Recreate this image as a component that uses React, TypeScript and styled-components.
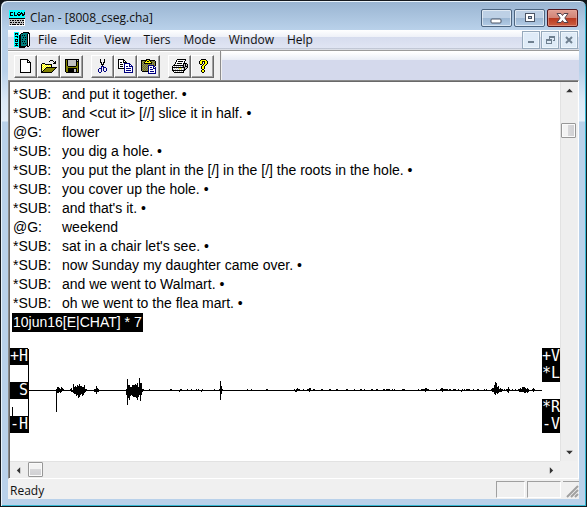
import React from "react";
import styled, { createGlobalStyle, css } from "styled-components";

const GlobalStyle = createGlobalStyle`
  * { box-sizing: border-box; }
  body { margin: 0; background: #101418; }
  button { font: inherit; color: inherit; margin: 0; padding: 0; border: 0; background: none; }
`;

/* ---------- pixel drawings ---------- */

const palette: Record<string, string> = {
  "#": "#000000",
  w: "#ffffff",
  o: "#808000",
  y: "#ffff00",
  p: "#ffff9c",
  b: "#000080",
  g: "#808080",
  s: "#c0c0c0",
  c: "#00ffff",
  t: "#008080",
};

function PixelArt({ rows }: { rows: string[] }) {
  const width = Math.max(...rows.map((r) => r.length));
  const paths: Record<string, string> = {};
  rows.forEach((row, y) => {
    let x = 0;
    while (x < row.length) {
      let end = x + 1;
      while (end < row.length && row[end] === row[x]) end++;
      if (palette[row[x]]) {
        paths[row[x]] = (paths[row[x]] || "") + `M${x} ${y}h${end - x}v1h${x - end}z`;
      }
      x = end;
    }
  });
  return (
    <svg width={width} height={rows.length} viewBox={`0 0 ${width} ${rows.length}`} shapeRendering="crispEdges" aria-hidden="true">
      {Object.entries(paths).map(([key, d]) => (
        <path key={key} d={d} fill={palette[key]} />
      ))}
    </svg>
  );
}

const appIcon = [
  "cccccccccccccccc",
  "cccccccccccccccc",
  "c###c#ccc##c#cc#",
  "c#ccc#cc#cc###c#",
  "c#ccc#cc####c###",
  "c###c###c##cc##c",
  "cccccccccccccccc",
  "cccccccccccccccc",
  "################",
  "sssssssssssssssw",
  "s#s##s#s##s#s##w",
  "sssssssssssssssw",
  "s##s#s##s##s#s#w",
  "sssssssssssssssw",
  "s#s####s##s##s#w",
  "wwwwwwwwwwwwwwww",
];
const docIcon = [
  "ccccc....######.",
  "c###c..##ttttt##",
  "c#c#c.#tttttt#w#",
  "ccccc##t#t#tt#w#",
  "c###c##tttttt#w#",
  "ccc#c##tt#t#t#w#",
  "ccccc##tttttt#w#",
  "c###c##t#tt#t#w#",
  "c#c#c##tttttt#w#",
  "c###c##t#t#tt#w#",
  "ccccc##tttttt#w#",
  "c###c##tt#t#t#w#",
  "cc#cc##tttttt#w#",
  "c###c##ttttt##.#",
  "ccccc#######.##.",
  ".....######.....",
];
const newIcon = [
  "########...",
  "#wwwwww##..",
  "#wwwwww#w#.",
  "#wwwwww####",
  ...Array(9).fill("#wwwwwwwww#"),
  "###########",
];
const openIcon = [
  ".........###....",
  "........#...#.#.",
  ".............##.",
  ".###........###.",
  "#pyp#######.....",
  "#ypypypypy#.....",
  "#pypypypyp#.....",
  "#ypyp###########",
  "#pyp#ooooooooo#.",
  "#yp#ooooooooo#..",
  "#p#ooooooooo#...",
  "##ooooooooo#....",
  "###########.....",
];
const saveIcon = [
  "##############",
  "#o#ssssssss#s#",
  "#o#ssssssss###",
  "#o#ssssssss#o#",
  "#o#ssssssss#o#",
  "#o#ssssssss#o#",
  "#o#ssssssss#o#",
  "#oo########oo#",
  "#oooooooooooo#",
  "#oo#########o#",
  "#oo######ss#o#",
  "#oo######ss#o#",
  "#oo######ss#o#",
  ".#############",
];
const cutIcon = [
  "..#...#..",
  "..#...#..",
  "..#...#..",
  "..##.##..",
  "...#.#...",
  "...###...",
  "....#....",
  "...bbb...",
  "...b.bbb.",
  ".bbb.b..b",
  "b..b.b..b",
  "b..b.b..b",
  "b..b..bb.",
  ".bb......",
];
const copyIcon = [
  "######.........",
  "#wwww##........",
  "#wwww#w#.......",
  "#w##w####......",
  "#wwwwwbbbbbb...",
  "#w###wbwwwwbb..",
  "#wwwwwbwwwwbwb.",
  "#w###wbwbbwbbbb",
  "#wwwwwbwwwwwwwb",
  "######bwbbbbbwb",
  "......bwwwwwwwb",
  "......bwbbbbbwb",
  "......bwwwwwwwb",
  "......bbbbbbbbb",
];
const pasteIcon = [
  ".....####......",
  "######yy######.",
  "#ogo#y##y#ogog#",
  "#go#yyyyyy#ogo#",
  "#og########gog#",
  "#gogogogogogog#",
  "#ogogogbbbbbbo#",
  "#gogogobwwwwbb.",
  "#ogogogbwbbwbwb",
  "#gogogobwwwwbbb",
  "#ogogogbwbbbwwb",
  "#gogogobwwwwwwb",
  ".######bwbbbbwb",
  ".......bwwwwwwb",
  ".......bbbbbbbb",
];
const printIcon = [
  ".....#########..",
  "....#wwwwwwww#..",
  "....#w#####w#...",
  "...#wwwwwwww#...",
  "...#w#####w####.",
  "..#wwwwwwww#s#s#",
  ".###########s#s#",
  "#wswswswsws#s###",
  "#############ss#",
  "#wswswsyysws#s#.",
  "#swswswswsws##..",
  "#############...",
  ".#wswswswsw#....",
  "..##########....",
];
const helpIcon = [
  "...#####..",
  "..#yyyyy#.",
  ".#yy###yy#",
  ".#yy#.#yy#",
  ".#yy#.#yy#",
  "..##.#yy#.",
  "....#yy#..",
  "...#yy#...",
  "...#yy#...",
  "...#yy#...",
  "....##....",
  "...#yy#...",
  "...#yy#...",
  "....##....",
];

/* ---------- window frame ---------- */

const Window = styled.div`
  min-height: 100vh;
  display: flex;
  flex-direction: column;
  padding: 0 7px 7px;
  border: 1px solid #15191e;
  border-radius: 7px 7px 0 0;
  background: linear-gradient(#99b4d1, #b9d1ea 29px, #b9d1ea 70px, #dce9f6 100px, #e3eef9 120px, #b9d1ea 121px);
  box-shadow: inset 1px 1px #e9f3fb, inset -1px -1px #36b8d3;
  font: 12px/16px "Open Sans", "Noto Sans", sans-serif;
  color: #111;
`;

const TitleBar = styled.header`
  height: 29px;
  display: flex;
  align-items: center;
  gap: 5px;
  padding: 4px 1px 0 1px;
`;

const Title = styled.h1`
  flex: 1;
  margin: 0;
  font-size: 12px;
  font-weight: 400;
  white-space: nowrap;
`;

const Caption = styled.div`
  display: flex;
  gap: 2px;
  height: 18px;
`;

const CaptionButton = styled.button<{ $close?: boolean }>`
  width: 31px;
  height: 18px;
  display: grid;
  place-items: center;
  border: 1px solid #4d6580;
  border-radius: 2px;
  box-shadow: inset 0 0 0 1px #ffffff88;
  background: linear-gradient(#bdd0e5 50%, #9bb6d2 50%, #b3cce6);
  ${(p) =>
    p.$close &&
    css`
      border-color: #501820;
      box-shadow: inset 0 0 0 1px #e9a79a99;
      background: linear-gradient(#dfa094, #d18375 50%, #b8371e 50%, #cc5f42);
    `}
`;

const Client = styled.div`
  flex: 1;
  display: flex;
  flex-direction: column;
  background: #f0f0f0;
`;

const MenuBar = styled.nav`
  height: 20px;
  display: flex;
  align-items: center;
  padding-left: 6px;
  background: linear-gradient(#ffffff, #eef1f8 7px, #d6dcee 7px, #e0e5f3 18px, #b5bccd 18px, #e8eaf0);
`;

const MenuItems = styled.div`
  flex: 1;
  display: flex;
  gap: 13px;
  padding-left: 8px;
`;

const MenuItem = styled.button`
  white-space: nowrap;
`;

const ChildControls = styled.div`
  display: flex;
  gap: 1px;
  padding-right: 1px;
`;

const ChildButton = styled.button`
  width: 18px;
  height: 18px;
  display: grid;
  place-items: center;
  border: 1px solid #96a9bb;
  background: #dfebf7;
  box-shadow: inset 0 0 0 1px #eef6fc;
`;

const ToolRow = styled.div`
  height: 30px;
  display: flex;
  border-top: 1px solid #9b9b9b;
  box-shadow: inset 0 1px #fff;
`;

const Toolbar = styled.div`
  display: flex;
  align-items: center;
  gap: 8px;
  padding: 1px 6px 0;
  border-right: 1px solid #8c8c8c;
`;

const ToolGroup = styled.div`
  display: flex;
`;

const ToolButton = styled.button`
  width: 23px;
  height: 23px;
  display: grid;
  place-items: center;
  border: 1px solid;
  border-color: #fff #696969 #696969 #fff;
  box-shadow: inset -1px -1px #a0a0a0;
`;

const ToolFill = styled.div`
  flex: 1;
  margin: 1px 0 0 1px;
  background: linear-gradient(#ffffff, #e9edf6 8px, #d4d9ec 8px);
`;

/* ---------- document ---------- */

const Document = styled.main`
  flex: 1;
  display: grid;
  grid-template-columns: 1fr 17px;
  grid-template-rows: 1fr 17px;
  border: 1px solid;
  border-color: #8a8a8a #fff #fff #8a8a8a;
  box-shadow: inset 1px 1px #696969;
  padding: 1px 1px 0 1px;
`;

const Page = styled.div`
  min-width: 0;
  padding-top: 3px;
  background: #fff;
  color: #000;
`;

const Line = styled.div`
  display: grid;
  grid-template-columns: 49px 1fr;
  padding-left: 3px;
  font: 14px/19px "Liberation Sans", Arial, sans-serif;
`;

const FileStatus = styled.div`
  width: fit-content;
  margin-left: 2px;
  padding: 0 1px;
  background: #000;
  color: #fff;
  font: 14px/19px "Liberation Sans", Arial, sans-serif;
`;

const Sound = styled.section`
  display: flex;
  height: 85px;
  margin-top: 16px;
`;

const SoundKeys = styled.div`
  width: 18px;
  display: grid;
  grid-template-rows: repeat(5, 17px);
`;

const SoundKey = styled.button<{ $row: number }>`
  grid-row: ${(p) => p.$row};
  background: #000;
  color: #fff;
  text-align: right;
  font: 15px/17px "DejaVu Sans Mono", monospace;
`;

const Tick = styled.span`
  grid-row: 4;
  align-self: end;
  width: 1px;
  height: 9px;
  margin-left: 2px;
  background: #000;
`;

const Wave = styled.svg`
  flex: 1;
  min-width: 0;
  height: 85px;
`;

const ScrollBar = styled.div<{ $vertical?: boolean }>`
  display: flex;
  flex-direction: ${(p) => (p.$vertical ? "column" : "row")};
  background: #eeeeee;
  border: solid #e2e2e2;
  border-width: ${(p) => (p.$vertical ? "0 0 0 1px" : "1px 0 0")};
`;

const ScrollArrow = styled.button<{ $vertical?: boolean }>`
  width: ${(p) => (p.$vertical ? 16 : 17)}px;
  height: ${(p) => (p.$vertical ? 17 : 16)}px;
  display: grid;
  place-items: center;
`;

const Track = styled.div<{ $vertical?: boolean }>`
  flex: 1;
  padding: ${(p) => (p.$vertical ? "24px 0 0" : "0 0 0 1px")};
`;

const Thumb = styled.div<{ $vertical?: boolean }>`
  width: 15px;
  height: 15px;
  border: 1px solid #979797;
  border-radius: 1px;
  box-shadow: inset 0 0 0 1px #fafafa;
  background: linear-gradient(${(p) => (p.$vertical ? "to right" : "to bottom")}, #f3f3f3 45%, #d8d8da 50%, #cfcfd2);
`;

const StatusBar = styled.footer`
  height: 20px;
  display: flex;
  gap: 2px;
  padding-top: 2px;
`;

const StatusText = styled.span`
  flex: 1;
  padding-left: 2px;
  line-height: 20px;
`;

const Pane = styled.span<{ $width: number }>`
  width: ${(p) => p.$width}px;
  height: 17px;
  border: 1px solid;
  border-color: #a0a0a0 #fff #fff #a0a0a0;
`;

const Grip = styled.span`
  width: 16px;
  height: 17px;
  border-top: 1px solid #a0a0a0;
`;

/* ---------- data ---------- */

const menus = ["File", "Edit", "View", "Tiers", "Mode", "Window", "Help"];

const tools: [string, string[]][][] = [
  [["New", newIcon], ["Open", openIcon], ["Save", saveIcon]],
  [["Cut", cutIcon], ["Copy", copyIcon], ["Paste", pasteIcon]],
  [["Print", printIcon], ["Help", helpIcon]],
];

const lines: [string, string][] = [
  ["*SUB:", "and put it together. •"],
  ["*SUB:", "and <cut it> [//] slice it in half. •"],
  ["@G:", "flower"],
  ["*SUB:", "you dig a hole. •"],
  ["*SUB:", "you put the plant in the [/] in the [/] the roots in the hole. •"],
  ["*SUB:", "you cover up the hole. •"],
  ["*SUB:", "and that's it. •"],
  ["@G:", "weekend"],
  ["*SUB:", "sat in a chair let's see. •"],
  ["*SUB:", "now Sunday my daughter came over. •"],
  ["*SUB:", "and we went to Walmart. •"],
  ["*SUB:", "oh we went to the flea mart. •"],
];

/* Each burst: start column, then [above, below] extents for successive columns. */
const bursts: [number, [number, number][]][] = [
  [28, [[1, 21], [3, 2], [3, 2], [2, 1], [1, 2], [3, 1], [2, 0], [1, 0]]],
  [42, [[1, 0], [2, 1], [0, 1], [6, 2], [3, 3], [4, 3], [3, 5], [5, 4], [4, 7], [6, 6], [4, 4], [4, 3], [3, 5], [3, 4], [5, 2], [1, 1], [1, 0]]],
  [66, [[1, 1], [1, 1], [4, 3], [2, 1], [1, 1]]],
  [98, [[1, 4], [11, 14], [5, 7], [5, 9], [3, 5], [3, 4], [5, 5], [5, 6], [5, 6], [6, 6], [5, 7], [7, 9], [3, 6], [12, 4], [7, 10], [7, 4], [1, 1], [1, 0]]],
  [191, [[1, 0], [9, 9], [4, 3], [1, 0]]],
  [266, [[1, 0], [0, 1], [1, 1], [2, 0], [1, 0], [1, 0]]],
  [279, [[1, 0], [1, 0], [2, 1], [2, 0]]],
  [395, [[1, 0], [1, 0], [2, 1], [2, 0], [1, 0], [1, 0]]],
  [412, [[1, 0], [2, 0], [2, 1], [1, 0], [1, 0], [1, 0], [1, 0]]],
  [463, [[1, 0], [2, 1], [2, 1], [5, 3], [8, 4], [7, 2], [3, 3], [4, 2], [1, 1], [2, 1], [1, 1], [1, 0]]],
  [478, [[1, 0], [1, 1], [3, 2], [1, 0]]],
  [490, [[1, 0], [1, 1], [2, 1], [1, 1], [3, 1], [3, 1], [3, 2], [2, 2], [1, 1], [2, 2], [1, 1]]],
  [504, [[1, 0], [2, 1], [1, 0]]],
];
const specks = [
  121, 142, 143, 152, 153, 159, 163, 168, 170, 174, 186, 219, 223, 238, 239, 271, 275, 285, 286, 293, 294,
  301, 302, 308, 309, 318, 319, 326, 332, 333, 336, 343, 344, 348, 349, 355, 356, 358, 359, 360, 361, 364,
  366, 374, 375, 376, 390, 393, 394, 408, 419, 421, 422, 425, 426, 427, 430, 434, 436, 438, 439, 440, 441,
  445, 449, 450, 456, 458, 476, 484, 487,
];
const dips = [151, 173, 433];

const wavePath =
  "M0 42h514v1H0z" +
  bursts
    .map(([start, cols]) => cols.map(([up, down], i) => `M${start + i} ${42 - up}h1v${up + down + 1}h-1z`).join(""))
    .join("") +
  specks.map((x) => `M${x} 41h1v1h-1z`).join("") +
  dips.map((x) => `M${x} 43h1v1h-1z`).join("");

const arrowPaths = {
  up: "M0 5L4 1L8 5z",
  down: "M0 1L4 5L8 1z",
  left: "M5 0L1 4L5 8z",
  right: "M1 0L5 4L1 8z",
};

function Arrow({ dir }: { dir: keyof typeof arrowPaths }) {
  const tall = dir === "left" || dir === "right";
  return (
    <svg width={tall ? 5 : 7} height={tall ? 7 : 5} viewBox={tall ? "0 0 6 8" : "0 0 8 6"} aria-hidden="true">
      <path d={arrowPaths[dir]} fill="#333" />
    </svg>
  );
}

export default function App() {
  return (
    <>
      <GlobalStyle />
      <Window>
        <TitleBar>
          <PixelArt rows={appIcon} />
          <Title>Clan - [8008_cseg.cha]</Title>
          <Caption>
            <CaptionButton aria-label="Minimize">
              <svg width="13" height="12"><rect x="1" y="7" width="10" height="4" rx="1" fill="#fff" stroke="#4a5566" /></svg>
            </CaptionButton>
            <CaptionButton aria-label="Maximize">
              <svg width="12" height="10" shapeRendering="crispEdges">
                <path d="M1 0h10v9H1z" fill="#4a5566" />
                <path d="M2 1h8v7H2z" fill="#fff" />
                <path d="M4 3h4v3H4z" fill="#4a5566" />
                <path d="M5 4h2v1H5z" fill="#b0c5dc" />
              </svg>
            </CaptionButton>
            <CaptionButton $close aria-label="Close">
              <svg width="13" height="10">
                <path d="M1 .5h4L6.500 2.500 8 .5h4L8.800 5l3.200 4.500H8L6.500 7.500 5 9.500H1L4.200 5z" fill="#fff" stroke="#53424c" />
              </svg>
            </CaptionButton>
          </Caption>
        </TitleBar>
        <Client>
          <MenuBar>
            <PixelArt rows={docIcon} />
            <MenuItems>
              {menus.map((m) => <MenuItem key={m}>{m}</MenuItem>)}
            </MenuItems>
            <ChildControls>
              <ChildButton aria-label="Minimize document">
                <svg width="8" height="8"><path d="M1 5h6v2H1z" fill="#6f8090" /></svg>
              </ChildButton>
              <ChildButton aria-label="Restore document">
                <svg width="9" height="8" shapeRendering="crispEdges">
                  <path d="M3 0h6v5H7V4h1V2H4v1H3zM0 3h6v5H0zM1 5v2h4V5z" fill="#6f8090" fillRule="evenodd" />
                </svg>
              </ChildButton>
              <ChildButton aria-label="Close document">
                <svg width="8" height="8"><path d="M1 1l6 6M7 1l-6 6" stroke="#6f8090" strokeWidth="2" /></svg>
              </ChildButton>
            </ChildControls>
          </MenuBar>
          <ToolRow>
            <Toolbar>
              {tools.map((group, i) => (
                <ToolGroup key={i}>
                  {group.map(([name, rows]) => (
                    <ToolButton key={name} aria-label={name}><PixelArt rows={rows} /></ToolButton>
                  ))}
                </ToolGroup>
              ))}
            </Toolbar>
            <ToolFill />
          </ToolRow>
          <Document>
            <Page>
              {lines.map(([tier, text], i) => (
                <Line key={i}><span>{tier}</span><span>{text}</span></Line>
              ))}
              <FileStatus>10jun16[E|CHAT] * 7</FileStatus>
              <Sound>
                <SoundKeys>
                  <SoundKey $row={1}>+H</SoundKey>
                  <SoundKey $row={3}>S</SoundKey>
                  <Tick />
                  <SoundKey $row={5}>-H</SoundKey>
                </SoundKeys>
                <Wave viewBox="0 0 514 85" preserveAspectRatio="none" shapeRendering="crispEdges" role="img" aria-label="Sound waveform">
                  <path d={wavePath} />
                  <path d="M0 1h1v84H0z" />
                </Wave>
                <SoundKeys>
                  <SoundKey $row={1}>+V</SoundKey>
                  <SoundKey $row={2}>*L</SoundKey>
                  <SoundKey $row={4}>*R</SoundKey>
                  <SoundKey $row={5}>-V</SoundKey>
                </SoundKeys>
              </Sound>
            </Page>
            <ScrollBar $vertical>
              <ScrollArrow $vertical aria-label="Scroll up"><Arrow dir="up" /></ScrollArrow>
              <Track $vertical><Thumb $vertical /></Track>
              <ScrollArrow $vertical aria-label="Scroll down"><Arrow dir="down" /></ScrollArrow>
            </ScrollBar>
            <ScrollBar>
              <ScrollArrow aria-label="Scroll left"><Arrow dir="left" /></ScrollArrow>
              <Track><Thumb /></Track>
              <ScrollArrow aria-label="Scroll right"><Arrow dir="right" /></ScrollArrow>
            </ScrollBar>
          </Document>
          <StatusBar>
            <StatusText>Ready</StatusText>
            <Pane $width={29} />
            <Pane $width={34} />
            <Grip>
              <svg width="16" height="16" aria-hidden="true">
                <path d="M4 15L15 4M8 15l7-7M12 15l3-3" stroke="#a0a0a0" strokeWidth="2" />
              </svg>
            </Grip>
          </StatusBar>
        </Client>
      </Window>
    </>
  );
}
